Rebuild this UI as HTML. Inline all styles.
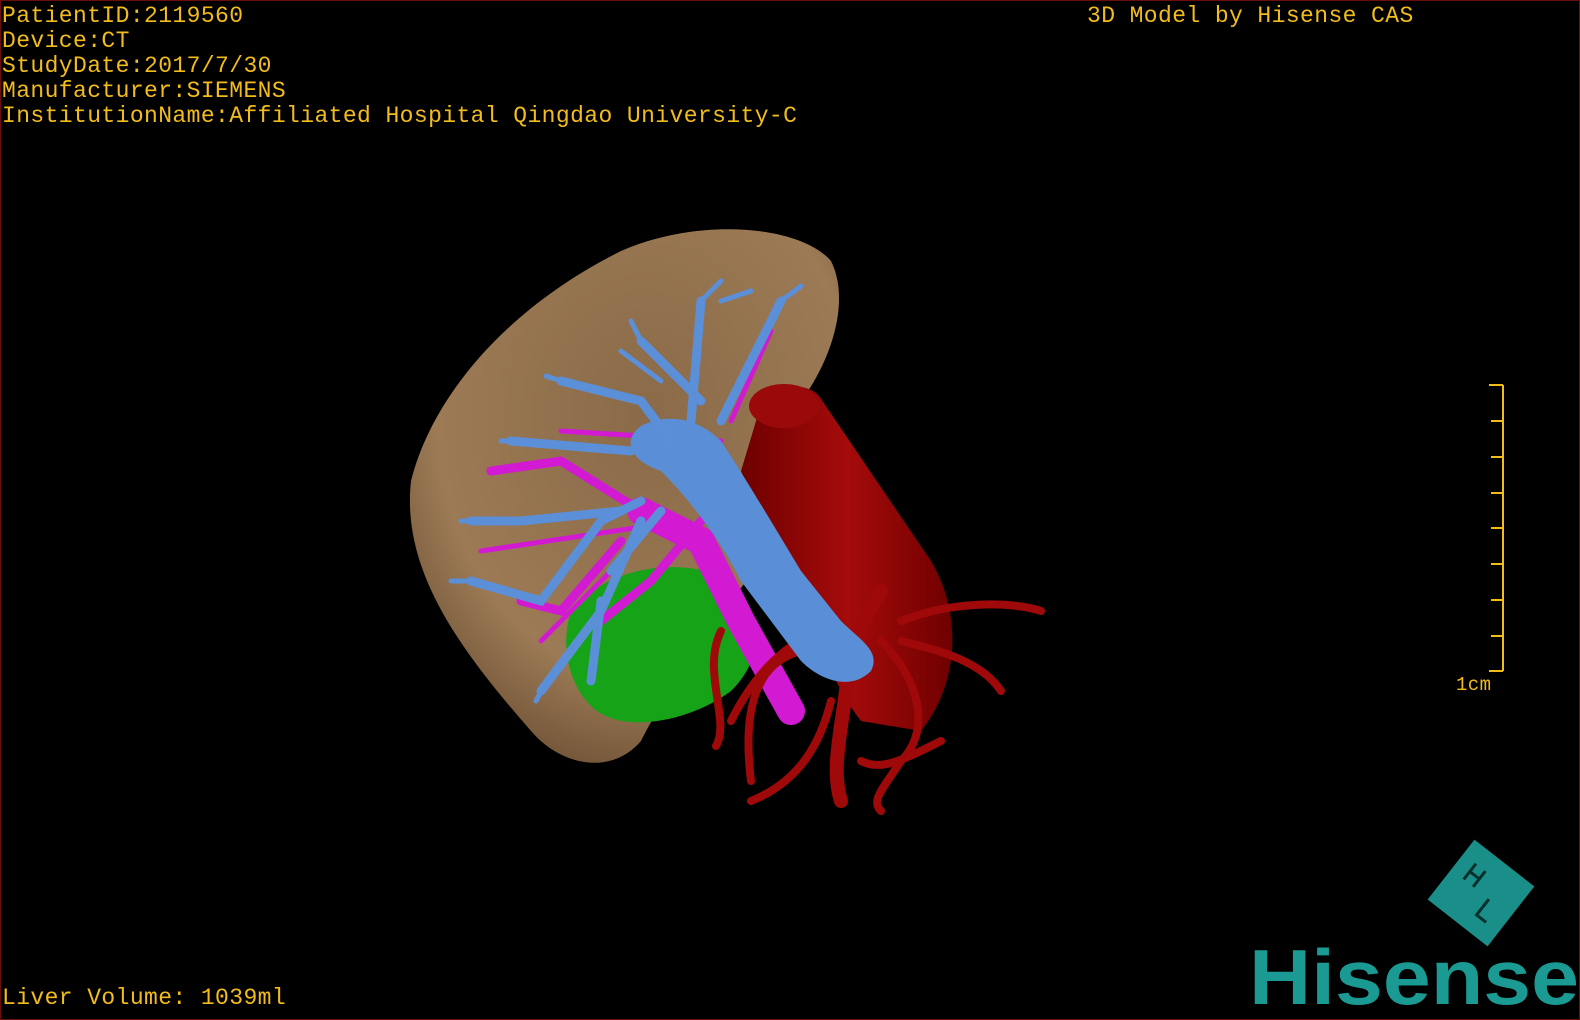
<!DOCTYPE html>
<html><head><meta charset="utf-8"><style>
html,body{margin:0;padding:0;background:#000;}
#s{position:relative;width:1580px;height:1020px;background:#000;overflow:hidden;box-sizing:border-box;border:1px solid #6a0d0d;}
.t{position:absolute;color:#f2bd1c;font-family:"Liberation Mono",monospace;font-size:23px;line-height:25px;white-space:pre;letter-spacing:0.4px;}
</style></head><body><div id="s">
<div class="t" style="left:1px;top:3px">PatientID:2119560
Device:CT
StudyDate:2017/7/30
Manufacturer:SIEMENS
InstitutionName:Affiliated Hospital Qingdao University-C</div>
<div class="t" style="left:1086px;top:3px">3D Model by Hisense CAS</div>
<div class="t" style="left:1px;top:985px">Liver Volume: 1039ml</div>
<div class="t" style="left:1455px;top:672px;font-size:19px">1cm</div>
<svg width="1580" height="1020" style="position:absolute;left:0;top:0">
<defs>
<radialGradient id="lv" cx="0.55" cy="0.35" r="0.7"><stop offset="0" stop-color="#8a6a48"/><stop offset="0.7" stop-color="#9c7a55"/><stop offset="1" stop-color="#6e5236"/></radialGradient>
<linearGradient id="rd" x1="0" x2="1"><stop offset="0" stop-color="#6e0000"/><stop offset="0.5" stop-color="#a50b0b"/><stop offset="1" stop-color="#700000"/></linearGradient>
</defs>
<g stroke="#f2bd1c" stroke-width="2" fill="none">
<path d="M1502 384V670M1488 384H1502M1488 670H1502"/>
<path d="M1490 420H1502M1490 456H1502M1490 492H1502M1490 527H1502M1490 563H1502M1490 599H1502M1490 635H1502"/>
</g>
<path d="M410 480C430 400 500 310 620 250C700 215 800 225 830 260C850 300 830 360 800 400L760 560C700 640 660 700 640 740C610 775 560 765 530 730C460 650 400 570 410 480Z" fill="url(#lv)"/>
<path d="M570 610C600 570 670 555 720 575C760 600 770 650 730 690C690 720 620 735 590 705C565 680 560 640 570 610Z" fill="#17a317"/>
<g stroke="#d21ad2" stroke-linecap="round" fill="none">
<path d="M790 710L740 620L700 540L640 510" stroke-width="28"/>
<path d="M640 510L560 460L490 470M620 540L560 610L520 600M700 520L650 580L600 620M740 600L700 560" stroke-width="9"/>
<path d="M730 420L770 330M720 440L560 430M680 520L480 550M620 560L540 640" stroke-width="5"/>
</g>
<path d="M755 420C760 390 800 375 818 395L930 560C960 610 960 680 920 730L860 720C830 680 820 640 790 600L740 470Z" fill="url(#rd)"/>
<ellipse cx="783" cy="405" rx="35" ry="22" fill="#9a0a0a"/>
<g stroke="#a00909" stroke-linecap="round" fill="none">
<path d="M880 590C860 620 850 650 845 690C840 730 830 770 840 800" stroke-width="14"/>
<path d="M900 620C950 600 1010 600 1040 610M900 640C940 650 980 660 1000 690M880 640C920 680 930 730 900 760C880 790 870 800 880 810M840 620C780 640 750 680 730 720M800 650C760 660 740 700 750 780M830 700C820 740 800 780 750 800M720 630C700 670 730 720 715 745M860 760C880 770 900 760 940 740" stroke-width="8"/>
</g>
<path d="M720 440C740 470 770 520 800 570L840 620C860 640 880 650 870 670C850 690 820 680 800 660L740 580C720 540 690 500 660 470C630 460 620 440 640 425C670 410 700 420 720 440Z" fill="#5a8ed6"/>
<g stroke="#5b8fd8" stroke-linecap="round" fill="none">
<path d="M670 440L640 400L560 380M690 420L700 300M720 420L780 300M700 400L640 340M630 450L510 440M640 500L600 520L540 600L470 580M620 510L520 520L470 520M640 520L600 610L540 690M600 600L590 680M660 510L610 570" stroke-width="9"/>
<path d="M700 300L720 280M780 300L800 285M640 340L630 320M560 380L545 375M510 440L500 440M470 580L450 580M470 520L460 520M540 690L535 700M720 300L750 290M660 380L620 350" stroke-width="5"/>
</g>
<g transform="translate(1480,892) rotate(38)">
<rect x="-38" y="-38" width="76" height="76" fill="#1a8e88"/>
<path d="M-22 -20V0M-10 -20V0M-22 -10H-10M10 0V20H22" stroke="#05302e" stroke-width="3" fill="none"/>
</g>
<text x="1248" y="1003" font-family="Liberation Sans,sans-serif" font-weight="bold" font-size="78" fill="#1a9a92" textLength="330" lengthAdjust="spacingAndGlyphs">Hisense</text>
</svg>
</div></body></html>
